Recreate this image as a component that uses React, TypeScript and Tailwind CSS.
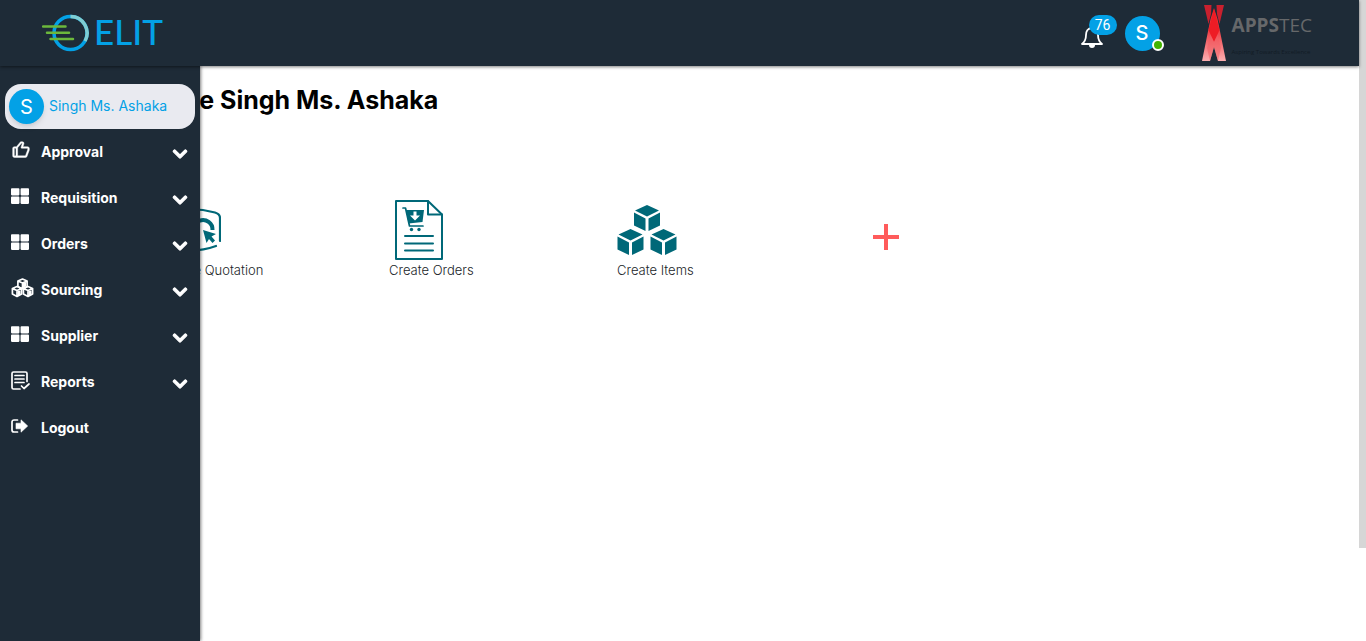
import type { ReactNode } from "react";
import { FaChevronDown, FaThLarge } from "react-icons/fa";
import { BiLike } from "react-icons/bi";

type MenuItem = { label: string; icon: ReactNode; expandable: boolean };

function CubesOutline() {
  const cube = "M0 -5 L4.6 -3 V2.6 L0 5 L-4.6 2.6 V-3 Z M-4.6 -3 L0 -1 L4.6 -3 M0 -1 V5";
  return (
    <svg viewBox="0 0 23 20" className="h-5 w-[23px]" fill="none" stroke="currentColor" strokeWidth="1.700" strokeLinejoin="round">
      <path d={cube} transform="translate(11.5 6)" />
      <path d={cube} transform="translate(6 13.5)" />
      <path d={cube} transform="translate(17 13.5)" />
      <path d="M12 5v5l3-1.500V4zM6.500 13v5l3-1.500v-4zM17.500 13v5l3-1.500v-4z" fill="currentColor" stroke="none" />
    </svg>
  );
}

function ReportIcon() {
  return (
    <svg viewBox="0 0 19 19" className="h-[19px] w-[19px]" fill="none" stroke="currentColor" strokeWidth="1.700" strokeLinecap="round" strokeLinejoin="round">
      <path d="M16 10.500V2.500a1.500 1.500 0 0 0-1.500-1.500h-12A1.500 1.500 0 0 0 1 2.500v14A1.500 1.500 0 0 0 2.500 18H9M4 4.500h9M4 8h9M4 11.500h9M10.500 15l2.500 2.500 5-4.500" />
    </svg>
  );
}

function LogoutIcon() {
  return (
    <svg viewBox="0 0 18 14" className="h-[14px] w-[18px]" fill="none">
      <path d="M6.500 1H3a2 2 0 0 0-2 2v8a2 2 0 0 0 2 2h3.500" stroke="currentColor" strokeWidth="1.700" strokeLinecap="round" />
      <path d="M10 .8 16.700 7 10 13.200V9.800H5V4.200h5z" fill="currentColor" stroke="currentColor" strokeWidth=".6" strokeLinejoin="round" />
    </svg>
  );
}

const menu: MenuItem[] = [
  { label: "Approval", icon: <BiLike className="size-5 stroke-current [stroke-width:0.5]" />, expandable: true },
  { label: "Requisition", icon: <FaThLarge className="size-[18px]" />, expandable: true },
  { label: "Orders", icon: <FaThLarge className="size-[18px]" />, expandable: true },
  { label: "Sourcing", icon: <CubesOutline />, expandable: true },
  { label: "Supplier", icon: <FaThLarge className="size-[18px]" />, expandable: true },
  { label: "Reports", icon: <ReportIcon />, expandable: true },
  { label: "Logout", icon: <LogoutIcon />, expandable: false },
];

function ElitLogo() {
  return (
    <a href="#home" aria-label="ELIT home" className="flex items-center gap-1 text-[#03a1e6]">
      <svg viewBox="0 0 48 38" className="h-[38px] w-12" fill="none">
        <circle cx="28.500" cy="19" r="16.500" stroke="#03a1e6" strokeWidth="3.500" />
        <path d="M28.500 2.500a16.500 16.500 0 0 1 14.500 24.500" stroke="#7fced3" strokeWidth="3.500" />
        <path d="M1 12.500h22.500M5 18.700h22M8.500 25h22.500" stroke="#6cb83c" strokeWidth="2.500" strokeLinecap="round" />
      </svg>
      <span className="pb-1 font-['Lato',sans-serif] text-[35px] leading-[38px] font-medium">ELIT</span>
    </a>
  );
}

function AppstecLogo() {
  return (
    <div className="flex gap-1.5">
      <svg viewBox="0 0 24 58" className="h-[58px] w-6">
        <defs>
          <linearGradient id="ribbon" x1="0" y1="0" x2="0" y2="1">
            <stop offset="0" stopColor="#ee1c25" />
            <stop offset=".45" stopColor="#f0444a" />
            <stop offset="1" stopColor="#fbaeb0" />
          </linearGradient>
        </defs>
        <path d="M2 1h7.500L9 10 6.500 20zM22 1h-7.500l.5 9 2.500 10z" fill="#c9202e" />
        <path d="M12 4 15.500 15 24 57H16L12 43 8 57H0L8.500 15z" fill="url(#ribbon)" />
        <path d="M12 5 17.500 26 12 38 6.500 26z" fill="#ee1c25" />
        <path d="M12 38 15.500 31 19 44 16 57 12 43 8 57 5 44 8.500 31z" fill="#f25f64" fillOpacity=".55" />
      </svg>
      <div className="flex flex-col font-['Open_Sans',sans-serif]">
        <span className="text-[19px] leading-[42px] text-[#66686a]"><b>APPS</b>TEC</span>
        <span className="text-[6px] leading-3 text-[#121b25]">Aspiring Towards Excellence</span>
      </div>
    </div>
  );
}

function Header() {
  return (
    <header className="relative z-20 flex h-[66px] items-center justify-between bg-[#1e2b37] pr-[47px] pl-[42px] shadow-[0_1px_3px_rgba(0,0,0,0.5)]">
      <ElitLogo />
      <div className="flex items-center">
        <button type="button" aria-label="Notifications" className="relative mr-[22px] pt-2 text-white">
          <svg viewBox="0 0 22 24" className="h-6 w-[22px]" fill="none" stroke="currentColor" strokeWidth="1.800" strokeLinejoin="round">
            <path d="M11 3C6.500 3 5 6.500 5 10c0 5-1.500 7-4 9h20c-2.500-2-4-4-4-9 0-3.500-1.500-7-6-7z" />
            <path d="M8 20a3 3 0 0 0 6 0z" fill="currentColor" stroke="none" />
          </svg>
          <span className="absolute -top-0.5 left-2 flex h-5 w-7 items-center justify-center rounded-full bg-[#03a1e6] font-['Roboto',sans-serif] text-sm">76</span>
        </button>
        <button type="button" aria-label="Account" className="relative mr-[42px] size-[35px] rounded-full bg-[#03a1e6] text-xl font-medium text-white">
          S
          <span className="absolute -right-1 bottom-0 size-3 rounded-full border-2 border-white bg-[#43b400]" />
        </button>
        <AppstecLogo />
      </div>
    </header>
  );
}

function Sidebar() {
  return (
    <aside className="absolute inset-y-0 left-0 z-10 w-[200px] bg-[#1e2b37] px-[5px] pt-[18px] text-white shadow-[1px_0_3px_rgba(0,0,0,0.5)]">
      <a href="#profile" className="flex h-[45px] items-center gap-[5px] rounded-2xl bg-[#e9eaf0] pl-1 text-sm text-[#03a1e6]">
        <span className="flex size-[35px] items-center justify-center rounded-full bg-[#03a1e6] text-xl text-white shadow-md">S</span>
        <span className="pb-0.5">Singh Ms. Ashaka</span>
      </a>
      <nav>
        <ul>
          {menu.map((item) => (
            <li key={item.label}>
              <button type="button" className="flex h-[46px] w-full items-center pr-[7px] pl-[6px] text-left text-sm font-bold">
                <span className="flex w-[30px] pb-1">{item.icon}</span>
                <span className="flex-1">{item.label}</span>
                {item.expandable && <FaChevronDown className="mt-1 size-4 stroke-current [stroke-width:36]" />}
              </button>
            </li>
          ))}
        </ul>
      </nav>
    </aside>
  );
}

function QuotationIcon() {
  return (
    <svg viewBox="0 0 60 60" className="size-[60px]" fill="none" stroke="#006878" strokeWidth="2.200" strokeLinecap="round">
      <path d="M59 41V18q0-4-5-5.500Q30 6 5 12.500 1 14 1 18v23M4 46q26 9 51 0" />
      <path d="M35 36a9.500 9.500 0 1 1 16.500-6" strokeWidth="4" strokeLinecap="butt" />
      <path d="M42 30l13 4-4.500 2.500 3.500 4-2.500 2.500-3.500-4-2.500 4z" fill="#006878" stroke="none" />
    </svg>
  );
}

function OrderIcon() {
  return (
    <svg viewBox="0 0 60 60" className="size-[60px]" fill="none" stroke="#006878" strokeWidth="2" strokeLinejoin="round" strokeLinecap="round">
      <path d="M7 1h32l14 13.500V59H7z" />
      <path d="M39 1v13.500h14" />
      <path d="M16 36h28M16 43.500h28M16 50.500h28" />
      <path d="M14 8h2.500l4 18H34" strokeWidth="1.700" />
      <path d="M17 10h18l-1.500 12-14 1.500z" fill="#006878" stroke="none" />
      <path d="M24.500 11.500h3v4h3.500l-5 5-5-5h3.500z" fill="#fff" stroke="none" />
      <circle cx="22.500" cy="29.500" r="1.700" fill="#006878" stroke="none" />
      <circle cx="30" cy="29.500" r="1.700" fill="#006878" stroke="none" />
    </svg>
  );
}

const cubePositions = [[30, 5], [13.5, 29], [46.5, 29]];

function ItemsIcon() {
  return (
    <svg viewBox="0 0 60 60" className="size-[60px]" fill="#006878">
      {cubePositions.map(([x, y]) => (
        <path key={x} transform={`translate(${x} ${y})`} d="M0 0 12 5.500 0 11.500-12 5.500zM-13 7.500-1.500 13.500V26L-13 20.500zM13 7.500 1.500 13.500V26L13 20.500z" />
      ))}
    </svg>
  );
}

const shortcuts = [
  { label: "Create Quotation", icon: <QuotationIcon /> },
  { label: "Create Orders", icon: <OrderIcon /> },
  { label: "Create Items", icon: <ItemsIcon /> },
];

export default function App() {
  return (
    <div className="flex min-h-screen bg-white font-['Inter',sans-serif] text-black">
      <div className="flex min-w-0 flex-1 flex-col">
        <Header />
        <div className="relative flex-1">
          <Sidebar />
          <main className="pt-4 pl-[100px]">
            <h1 className="text-[25px] leading-9 font-bold">Welcome Singh Ms. Ashaka</h1>
            <div className="mt-[82px] flex pl-[61px]">
              {shortcuts.map((item) => (
                <a key={item.label} href="#create" className="flex w-[228px] flex-col text-[13px] leading-5 font-light text-[#212529]">
                  {item.icon}
                  {item.label}
                </a>
              ))}
              <button type="button" aria-label="Add shortcut" className="mt-6 ml-7 size-[26px] text-[#ff5b5b]">
                <svg viewBox="0 0 26 26" className="size-[26px]" stroke="currentColor" strokeWidth="4">
                  <path d="M0 13h26M13 0v26" />
                </svg>
              </button>
            </div>
          </main>
        </div>
      </div>
      <div className="w-[7px] bg-white">
        <div className="h-[85.5vh] bg-[#d6d6d6]" />
      </div>
    </div>
  );
}
